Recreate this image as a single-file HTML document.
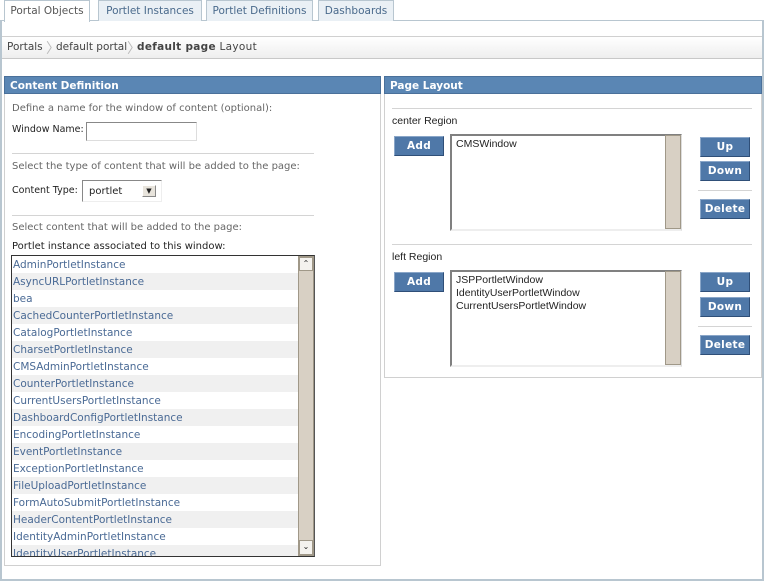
<!DOCTYPE html>
<html><head><style>
*{margin:0;padding:0;box-sizing:border-box}
body{width:764px;height:581px;background:#fff;font-family:"DejaVu Sans","Liberation Sans",sans-serif;font-size:10px;position:relative;overflow:hidden;color:#222}
.a{position:absolute}
.tab{position:absolute;top:0;height:21px;border:1px solid #b8c6d0;border-bottom:none;background:#eaf0f5;color:#4a6a8c;font-size:10.5px;line-height:20px;text-align:center}
.hdr{position:absolute;height:18px;background:#5a86b4;color:#fff;font-weight:bold;font-size:10.5px;line-height:18px;padding-left:5px}
.btn{position:absolute;width:50px;height:20px;background:#4f78a8;border:1px solid #2f4f78;border-top-color:#8aa6c8;border-left-color:#8aa6c8;color:#fff;font-weight:bold;font-size:10.5px;line-height:18px;text-align:center;letter-spacing:.3px}
.hr{position:absolute;height:1px;background:#d4d4d4}
.gt{color:#666}
.ta{position:absolute;border:2px solid #808080;border-right-color:#ddd;border-bottom-color:#eee;background:#fff;font-size:10.5px;padding:2px 4px;line-height:13px;font-family:"Liberation Sans",sans-serif}
.sb{position:absolute;width:16px;background:#d8d0c4;border:1px solid #a09888}
.list div{height:17px;line-height:18px;color:#4a6a95;padding-left:1px;font-size:10.5px}
.list div:nth-child(even){background:#f0f0f0}
</style></head><body>
<div class="a" style="left:0;top:20px;width:764px;height:1px;background:#b8c6d0"></div>
<div class="tab" style="left:4px;width:86px;background:#fff;color:#555;height:22px">Portal Objects</div>
<div class="tab" style="left:98px;width:104px">Portlet Instances</div>
<div class="tab" style="left:206px;width:107px">Portlet Definitions</div>
<div class="tab" style="left:318px;width:76px">Dashboards</div>
<div class="a" style="left:0;top:20px;width:2px;height:561px;background:#b8c6d0"></div>
<div class="a" style="left:762px;top:20px;width:2px;height:561px;background:#b8c6d0"></div>
<div class="a" style="left:0;top:579px;width:764px;height:2px;background:#b8c6d0"></div>
<div class="a" style="left:2px;top:36px;width:760px;height:23px;border-top:1px solid #d0d0d0;border-bottom:1px solid #c8c8c8;background:linear-gradient(#fff,#eee)"></div>
<div class="a" style="left:7px;top:41px;color:#444;font-size:10.5px">Portals</div>
<div class="a" style="left:46px;top:38px;color:#bbb;font-size:14px">〉</div>
<div class="a" style="left:56px;top:41px;color:#444;font-size:10.5px">default portal</div>
<div class="a" style="left:127px;top:38px;color:#bbb;font-size:14px">〉</div>
<div class="a" style="left:137px;top:41px;color:#444;font-size:10.5px;letter-spacing:0.3px"><b>default page</b> Layout</div>

<div class="a" style="left:4px;top:76px;width:377px;height:490px;border:1px solid #d0d0d0"></div>
<div class="hdr" style="left:4px;top:76px;width:377px;border:1px solid #4a709a">Content Definition</div>
<div class="a gt" style="left:12px;top:103px">Define a name for the window of content (optional):</div>
<div class="a" style="left:12px;top:124px;font-size:9.5px">Window Name:</div>
<div class="a" style="left:86px;top:122px;width:111px;height:19px;border:1px solid #888;border-right-color:#ddd;border-bottom-color:#ddd"></div>
<div class="hr" style="left:12px;top:153px;width:302px"></div>
<div class="a gt" style="left:12px;top:161px">Select the type of content that will be added to the page:</div>
<div class="a" style="left:12px;top:185px;font-size:9.5px">Content Type:</div>
<div class="a" style="left:82px;top:180px;width:80px;height:22px;border:1px solid #888;border-right-color:#eee;border-bottom-color:#eee;font-size:10px;padding:5px 6px">portlet</div>
<div class="a" style="left:142px;top:185px;width:14px;height:12px;border:1px solid #888;border-top-color:#fff;border-left-color:#fff;background:#e8e4dc;font-size:7px;text-align:center;line-height:10px">▼</div>
<div class="hr" style="left:12px;top:215px;width:302px"></div>
<div class="a gt" style="left:12px;top:222px">Select content that will be added to the page:</div>
<div class="a" style="left:12px;top:241px">Portlet instance associated to this window:</div>
<div class="a" style="left:11px;top:255px;width:304px;height:302px;border:1px solid #333;border-right-color:#555;overflow:hidden">
<div class="list" style="width:286px">
<div>AdminPortletInstance</div><div>AsyncURLPortletInstance</div><div>bea</div><div>CachedCounterPortletInstance</div><div>CatalogPortletInstance</div><div>CharsetPortletInstance</div><div>CMSAdminPortletInstance</div><div>CounterPortletInstance</div><div>CurrentUsersPortletInstance</div><div>DashboardConfigPortletInstance</div><div>EncodingPortletInstance</div><div>EventPortletInstance</div><div>ExceptionPortletInstance</div><div>FileUploadPortletInstance</div><div>FormAutoSubmitPortletInstance</div><div>HeaderContentPortletInstance</div><div>IdentityAdminPortletInstance</div><div>IdentityUserPortletInstance</div>
</div>
<div class="sb" style="left:286px;top:0;height:300px"></div>
<div class="a" style="left:287px;top:1px;width:14px;height:14px;background:#f4f2ee;border:1px solid #a09888;font-size:8px;text-align:center;line-height:12px">⌃</div>
<div class="a" style="left:287px;top:284px;width:14px;height:15px;background:#f4f2ee;border:1px solid #a09888;font-size:8px;text-align:center;line-height:12px">⌄</div>
</div>

<div class="a" style="left:384px;top:76px;width:378px;height:302px;border:1px solid #d0d0d0"></div>
<div class="hdr" style="left:384px;top:76px;width:378px;border:1px solid #4a709a">Page Layout</div>
<div class="hr" style="left:392px;top:108px;width:360px"></div>
<div class="a" style="left:392px;top:115px;font-size:10.5px;font-family:'Liberation Sans',sans-serif">center Region</div>
<div class="btn" style="left:394px;top:136px">Add</div>
<div class="ta" style="left:450px;top:134px;width:232px;height:97px">CMSWindow</div>
<div class="sb" style="left:665px;top:135px;height:94px"></div>
<div class="btn" style="left:700px;top:137px">Up</div>
<div class="btn" style="left:700px;top:161px">Down</div>
<div class="hr" style="left:698px;top:190px;width:54px"></div>
<div class="btn" style="left:700px;top:199px">Delete</div>
<div class="hr" style="left:392px;top:244px;width:360px"></div>
<div class="a" style="left:392px;top:251px;font-size:10.5px;font-family:'Liberation Sans',sans-serif">left Region</div>
<div class="btn" style="left:394px;top:272px">Add</div>
<div class="ta" style="left:450px;top:270px;width:232px;height:97px">JSPPortletWindow<br>IdentityUserPortletWindow<br>CurrentUsersPortletWindow</div>
<div class="sb" style="left:665px;top:271px;height:94px"></div>
<div class="btn" style="left:700px;top:272px">Up</div>
<div class="btn" style="left:700px;top:297px">Down</div>
<div class="hr" style="left:698px;top:326px;width:54px"></div>
<div class="btn" style="left:700px;top:335px">Delete</div>
</body></html>
